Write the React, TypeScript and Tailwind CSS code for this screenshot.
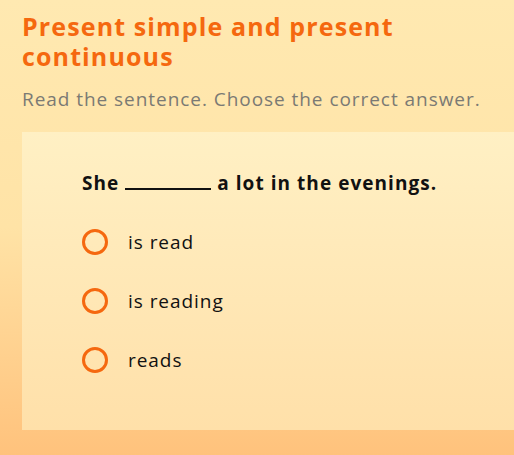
export default function App() {
  const options = ["is read", "is reading", "reads"];
  return (
    <div className="min-h-[455px] w-full bg-gradient-to-b from-[#ffe9b1] via-[#ffe3a6] to-[#ffc27c] pt-[11px] pb-[25px] font-['Open_Sans',sans-serif]">
      <div className="px-[22px]">
        <h1 className="text-[25px] leading-[30px] font-bold tracking-[0.045em] text-[#f5680f]">
          <span className="block">Present simple and present</span>
          <span className="block">continuous</span>
        </h1>
        <p className="mt-[16px] text-[19px] leading-[24px] tracking-[0.05em] text-[#7b7a74]">
          Read the sentence. Choose the correct answer.
        </p>
      </div>
      <div className="ml-[22px] mt-[21px] h-[298px] bg-gradient-to-b from-[#fff0c4] to-[#ffe0a9] pl-[60px] pt-[39px]">
        <p className="text-[19px] leading-[24px] font-bold tracking-[0.055em] text-[#111]">
          She <span className="inline-block w-[86px] border-b-2 border-[#111] align-baseline" /> a lot in the evenings.
        </p>
        <div className="mt-[34px] flex flex-col gap-[33px]">
          {options.map((o) => (
            <label key={o} className="flex items-center gap-[20px]">
              <span className="h-[26px] w-[26px] rounded-full border-[3px] border-[#f5680f]" />
              <span className="text-[19px] leading-[26px] tracking-[0.05em] text-[#111]">{o}</span>
            </label>
          ))}
        </div>
      </div>
    </div>
  );
}
